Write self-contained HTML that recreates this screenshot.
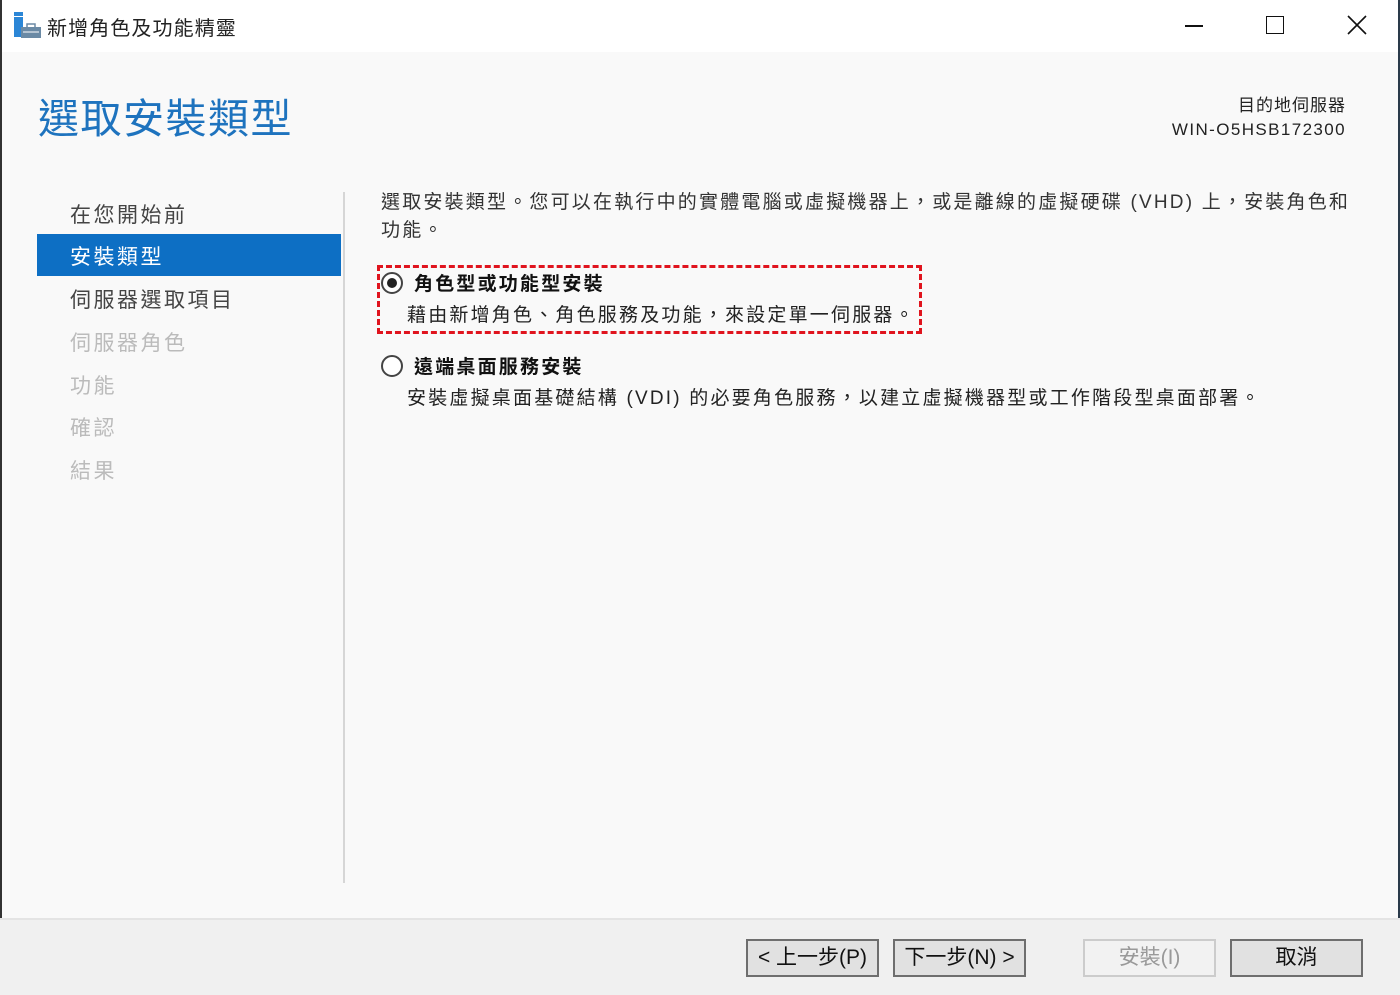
<!DOCTYPE html>
<html><head><meta charset="utf-8"><style>
*{margin:0;padding:0;box-sizing:border-box}
body{width:1400px;height:995px;overflow:hidden;background:#f9f9f9;font-family:"Liberation Sans","Noto Sans CJK TC",sans-serif;position:relative;color:#222}
.a{position:absolute;white-space:nowrap}
#tb{position:absolute;left:0;top:0;width:1400px;height:52px;background:#fff}
#foot{position:absolute;left:0;top:918px;width:1400px;height:77px;background:#f0f0f0;border-top:2px solid #e4e4e4}
.btn{position:absolute;top:939px;height:38px;width:133px;border:2px solid #6e6e6e;background:#e1e1e1;font-size:21px;text-align:center;line-height:34px;color:#111}
.nav{position:absolute;left:70px;font-size:21px;color:#444;letter-spacing:2.5px}
.dis{color:#bbb}
.o{letter-spacing:2.2px}
</style></head><body>
<div id="tb"></div>
<div style="position:absolute;left:0;top:0;width:2px;height:995px;background:#333"></div>
<div style="position:absolute;right:0;top:0;width:2px;height:995px;background:#2a3a4a"></div>
<svg class="a" style="left:13px;top:11px" width="29" height="29"><rect x="1" y="1" width="9" height="4" fill="#2b86d6"/><rect x="1" y="6" width="9" height="20" fill="#2b86d6"/><rect x="8" y="16" width="20" height="11" fill="#6b8aa5"/><rect x="14" y="13" width="8" height="4" fill="none" stroke="#6b8aa5" stroke-width="1.5"/><line x1="10" y1="21" x2="26" y2="21" stroke="#fff" stroke-width="1"/></svg>
<div class="a" style="left:47px;top:12px;font-size:20px;color:#222;letter-spacing:1.1px">新增角色及功能精靈</div>
<div class="a" style="left:1185px;top:25px;width:18px;height:1.5px;background:#111"></div>
<div class="a" style="left:1266px;top:16px;width:18px;height:18px;border:1.5px solid #111"></div>
<svg class="a" style="left:1347px;top:15px" width="20" height="20"><path d="M1 1L19 19M19 1L1 19" stroke="#111" stroke-width="1.6"/></svg>
<div class="a" style="left:38px;top:85px;font-size:41px;color:#1e73be;letter-spacing:1.5px">選取安裝類型</div>
<div class="a" style="right:54px;top:94px;font-size:17px;text-align:right;line-height:24px;color:#222;letter-spacing:1px">目的地伺服器<br><span style="letter-spacing:1.4px">WIN-O5HSB172300</span></div>
<div class="nav" style="top:199px">在您開始前</div>
<div class="a" style="left:37px;top:234px;width:304px;height:42px;background:#0d6fc4"></div>
<div class="nav" style="top:241px;color:#fff">安裝類型</div>
<div class="nav" style="top:284px">伺服器選取項目</div>
<div class="nav dis" style="top:327px">伺服器角色</div>
<div class="nav dis" style="top:370px">功能</div>
<div class="nav dis" style="top:412px">確認</div>
<div class="nav dis" style="top:455px">結果</div>
<div class="a" style="left:343px;top:192px;width:2px;height:691px;background:#d6d6d6"></div>
<div class="a o" style="left:381px;top:189px;font-size:19px;line-height:28px;color:#333;white-space:normal;width:975px">選取安裝類型。您可以在執行中的實體電腦或虛擬機器上，或是離線的虛擬硬碟 (VHD) 上，安裝角色和功能。</div>
<div class="a" style="left:377px;top:265px;width:545px;height:69px;border:3px dashed #e0141e"></div>
<div class="a" style="left:381px;top:272px;width:22px;height:22px;border:2px solid #444;border-radius:50%;background:#fff"></div>
<div class="a" style="left:387px;top:278px;width:10px;height:10px;border-radius:50%;background:#222"></div>
<div class="a o" style="left:414px;top:269px;font-size:19px;font-weight:bold;color:#111">角色型或功能型安裝</div>
<div class="a o" style="left:407px;top:300px;font-size:19px;color:#222">藉由新增角色、角色服務及功能，來設定單一伺服器。</div>
<div class="a" style="left:381px;top:355px;width:22px;height:22px;border:2px solid #444;border-radius:50%;background:#fff"></div>
<div class="a o" style="left:414px;top:352px;font-size:19px;font-weight:bold;color:#111">遠端桌面服務安裝</div>
<div class="a o" style="left:407px;top:383px;font-size:19px;color:#222">安裝虛擬桌面基礎結構 (VDI) 的必要角色服務，以建立虛擬機器型或工作階段型桌面部署。</div>
<div id="foot"></div>
<div class="btn" style="left:746px">&lt; 上一步(P)</div>
<div class="btn" style="left:893px">下一步(N) &gt;</div>
<div class="btn" style="left:1083px;border-color:#ccc;background:#f2f2f2;color:#999">安裝(I)</div>
<div class="btn" style="left:1230px">取消</div>
</body></html>
